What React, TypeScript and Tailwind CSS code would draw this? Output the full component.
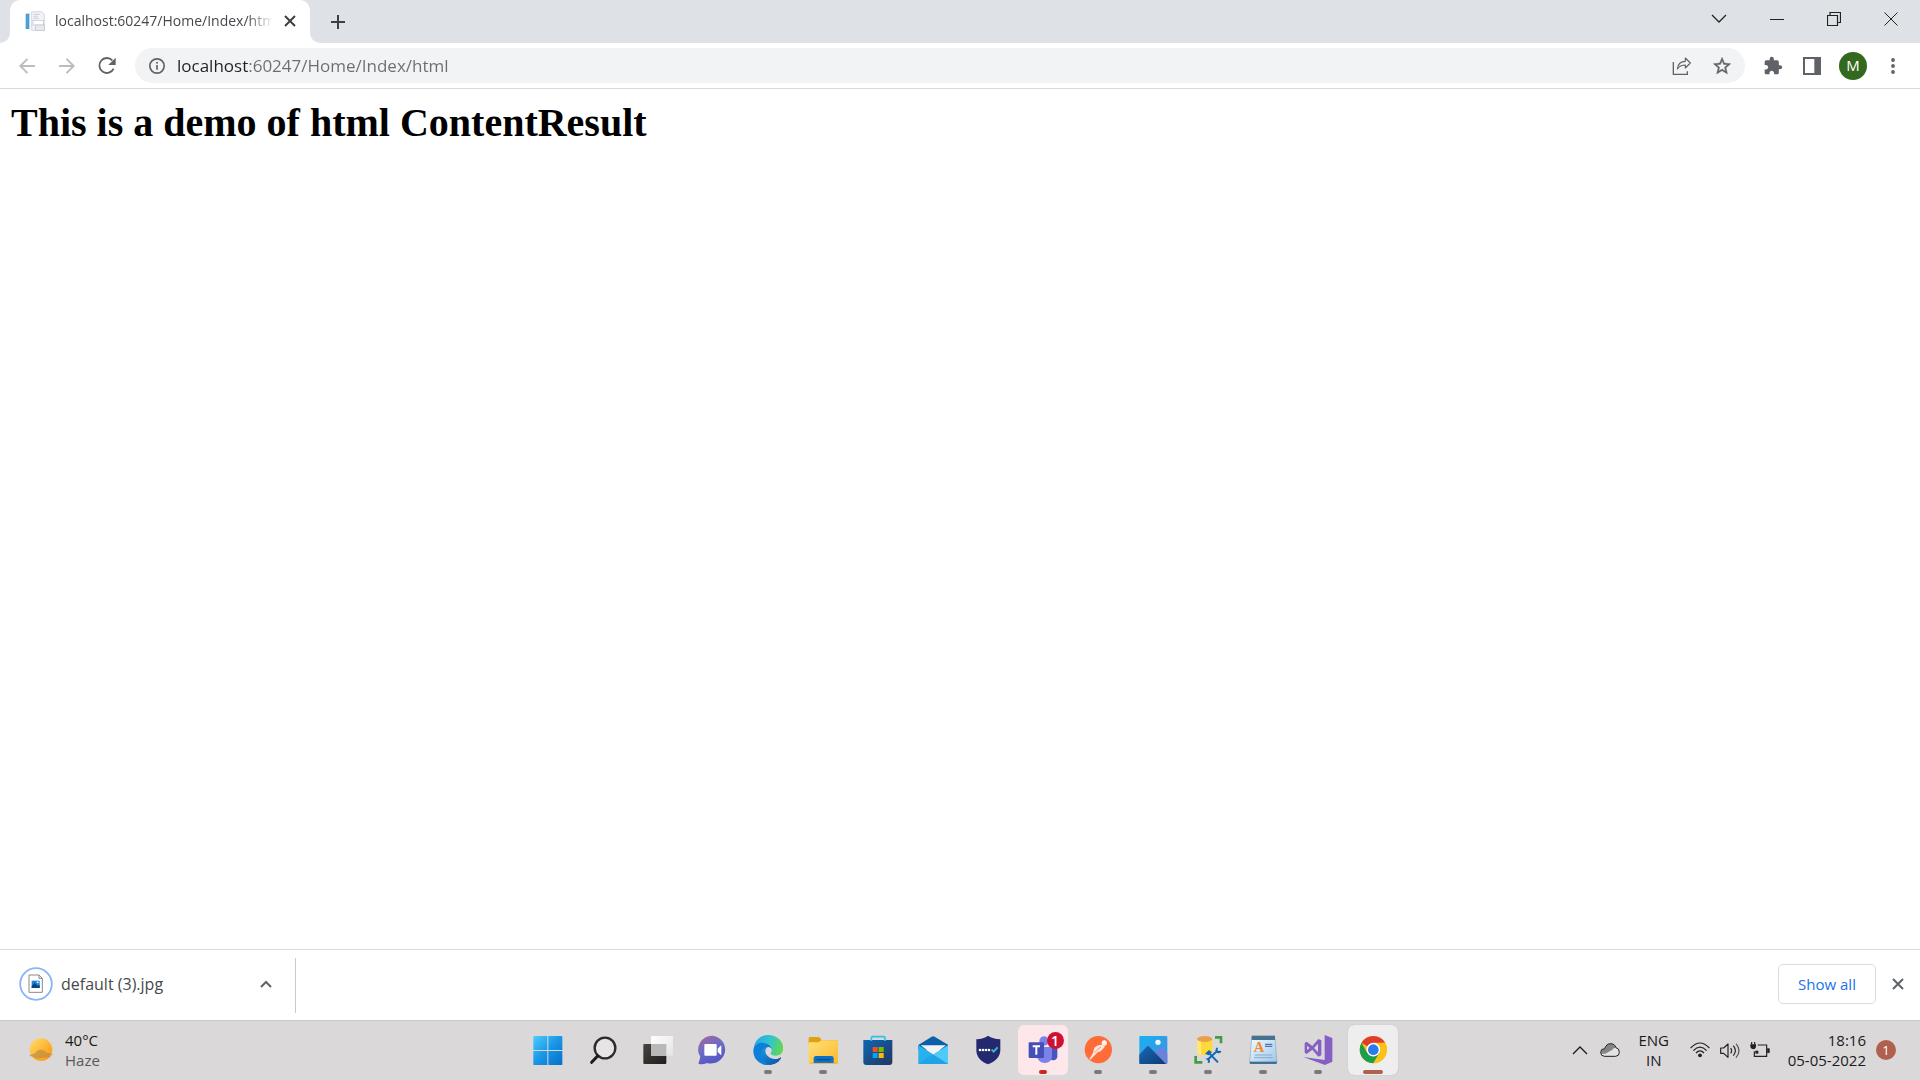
import React from "react";

type IconProps = { className?: string };

/* ---------- Browser icons ---------- */

const PageFavicon = () => (
  <svg viewBox="0 0 60 60" className="size-5 shrink-0" aria-hidden="true">
    <path d="M20 2h30l8 8v48H20z" fill="#f1f3f7" stroke="#c3c9d4" strokeWidth="2" />
    <rect x="2" y="8" width="12" height="46" fill="#4a9edb" />
    <path d="M26 10h18M26 16h12M26 22h16" stroke="#c9ced8" strokeWidth="3" />
    <rect x="24" y="28" width="32" height="14" fill="#fff" stroke="#bcc2ce" strokeWidth="2" />
    <rect x="32" y="42" width="27" height="16" fill="#e6e9f0" stroke="#bcc2ce" strokeWidth="2" />
    <path d="M14 6v50" stroke="#d4d9e2" strokeWidth="3" />
  </svg>
);

const Cross = ({ className }: IconProps) => (
  <svg viewBox="0 0 12 12" className={className} fill="none" stroke="currentColor" strokeWidth="2" aria-hidden="true">
    <path d="M1 1l10 10M11 1L1 11" />
  </svg>
);

const ArrowLeft = ({ className }: IconProps) => (
  <svg viewBox="0 0 20 20" className={className} fill="none" stroke="currentColor" strokeWidth="1.9" aria-hidden="true">
    <path d="M18 10H3.500M10.500 2.800L3.300 10l7.200 7.200" />
  </svg>
);

const Reload = () => (
  <svg viewBox="0 0 60 60" className="size-5" aria-hidden="true">
    <path d="M46 13A22.500 22.500 0 1 0 50 38" fill="none" stroke="#5f6368" strokeWidth="5.500" />
    <path d="M56 5v22H34z" fill="#5f6368" />
  </svg>
);

const InfoCircle = () => (
  <svg viewBox="0 0 48 48" className="size-4" aria-hidden="true">
    <circle cx="24" cy="24" r="21.500" fill="none" stroke="#5f6368" strokeWidth="5" />
    <path d="M24 21v14" stroke="#5f6368" strokeWidth="5" />
    <circle cx="24" cy="14.500" r="3" fill="#5f6368" />
  </svg>
);

const Share = () => (
  <svg viewBox="0 0 60 60" className="size-5" fill="none" stroke="#5f6368" strokeWidth="4" aria-hidden="true">
    <path d="M4 18v37h42v-9" />
    <path d="M16 39c2-16 10-23 24-23V6l15 15-15 15V27c-11 0-18 3-24 12z" strokeLinejoin="round" strokeWidth="3.500" />
  </svg>
);

const Star = () => (
  <svg viewBox="0 0 24 24" className="size-6" aria-hidden="true">
    <path
      d="M22 9.240l-7.190-.62L12 2 9.190 8.630 2 9.240l5.460 4.730L5.820 21 12 17.270 18.180 21l-1.630-7.030zM12 15.400l-3.760 2.270 1-4.280-3.320-2.880 4.380-.38L12 6.100l1.710 4.040 4.380.38-3.320 2.880 1 4.280z"
      fill="#5f6368"
      stroke="#5f6368"
      strokeWidth=".4"
      transform="translate(1.500 1.500) scale(.88)"
    />
  </svg>
);

const Puzzle = () => (
  <svg viewBox="0 0 24 24" className="size-5" aria-hidden="true">
    <path
      d="M20.500 11H19V7c0-1.100-.9-2-2-2h-4V3.500a2.500 2.500 0 0 0-5 0V5H4c-1.100 0-1.990.9-1.990 2v3.800H3.500c1.490 0 2.700 1.210 2.700 2.700s-1.210 2.700-2.700 2.700H2V20c0 1.100.9 2 2 2h3.800v-1.500c0-1.490 1.210-2.700 2.700-2.700s2.700 1.210 2.700 2.700V22H17c1.100 0 2-.9 2-2v-4h1.500a2.500 2.500 0 0 0 0-5z"
      fill="#5f6368"
    />
  </svg>
);

const SidePanel = () => (
  <svg viewBox="0 0 54 54" className="size-[18px]" aria-hidden="true">
    <rect x="3" y="3" width="48" height="48" fill="#fff" stroke="#5f6368" strokeWidth="6" />
    <rect x="34" y="3" width="18" height="48" fill="#5f6368" />
  </svg>
);

const ImageFile = () => (
  <svg viewBox="0 0 102 102" className="size-[34px] shrink-0" aria-hidden="true">
    <circle cx="51" cy="51" r="47.500" fill="#fff" stroke="#8ab4f8" strokeWidth="5.500" />
    <path d="M30 24h30l10 10v42H30z" fill="#fff" stroke="#8a8a8a" strokeWidth="3" />
    <path d="M60 24v10h10" fill="none" stroke="#8a8a8a" strokeWidth="3" />
    <rect x="38" y="41" width="24" height="22" fill="#1685dc" />
    <path d="M38 57l9-9 9 9 6-4v10H38z" fill="#0b3f86" />
    <circle cx="56" cy="46" r="3" fill="#e3f3ff" />
  </svg>
);

/* ---------- Taskbar icons, each on a 90 unit grid ---------- */

const Icon = ({ children }: { children: React.ReactNode }) => (
  <svg viewBox="0 0 90 90" className="size-[30px]" aria-hidden="true">
    {children}
  </svg>
);

const Gradient = ({ id, from, to }: { id: string; from: string; to: string }) => (
  <linearGradient id={id} x1="0" y1="0" x2="1" y2="1">
    <stop offset="0" stopColor={from} />
    <stop offset="1" stopColor={to} />
  </linearGradient>
);

const StartIcon = () => (
  <Icon>
    <linearGradient id="win" gradientUnits="userSpaceOnUse" x1="0" y1="0" x2="88" y2="88">
      <stop offset="0" stopColor="#4fd0ff" />
      <stop offset=".5" stopColor="#1a97e6" />
      <stop offset="1" stopColor="#0271cb" />
    </linearGradient>
    <path d="M3 3h40v42H1V5q0-2 2-2zM46 3h40q2 0 2 2v40H46zM1 48h42v42H3q-2 0-2-2zM46 48h42v40q0 2-2 2H46z" fill="url(#win)" />
  </Icon>
);

const SearchIcon = () => (
  <Icon>
    <circle cx="51" cy="39" r="31" fill="#e6e4e4" stroke="#2b2b2b" strokeWidth="7" />
    <path d="M29 63L11 82" stroke="#1c1c1c" strokeWidth="9" strokeLinecap="round" />
  </Icon>
);

const TaskViewIcon = () => (
  <Icon>
    <Gradient id="tvd" from="#454440" to="#1f1f1d" />
    <Gradient id="tvl" from="#ffffff" to="#e3e3e3" />
    <rect x="1" y="27" width="69" height="60" rx="3" fill="url(#tvd)" />
    <rect x="24" y="3" width="67" height="59" rx="3" fill="url(#tvl)" />
    <rect x="24" y="27" width="46" height="35" fill="#b9b9b7" />
  </Icon>
);

const ChatIcon = () => (
  <Icon>
    <linearGradient id="chat" x1=".2" y1="0" x2=".6" y2="1">
      <stop offset="0" stopColor="#a0689f" />
      <stop offset=".45" stopColor="#6f6bc6" />
      <stop offset="1" stopColor="#5255c4" />
    </linearGradient>
    <path d="M45 2a43 42 0 1 1-18 82Q14 90 3 87 0 86 3 80L7 66A42 42 0 0 1 45 2z" fill="url(#chat)" />
    <rect x="19" y="27" width="37" height="35" rx="3" fill="#fff" />
    <path d="M59 41l9-9q2-1 2 2v24q0 3-2 1l-9-8z" fill="#fff" />
  </Icon>
);

const EdgeIcon = () => (
  <Icon>
    <linearGradient id="edgeTop" x1="0" y1=".4" x2="1" y2=".6">
      <stop offset="0" stopColor="#22a9e8" />
      <stop offset=".5" stopColor="#2fc5cf" />
      <stop offset="1" stopColor="#67d84b" />
    </linearGradient>
    <Gradient id="edgeLow" from="#1c9be5" to="#0a4f9e" />
    <path d="M2 40C6 14 24 0 46 0c28 0 45 21 45 40 0 14-10 22-22 22-10 0-16-3-16-7 0-3 4-5 3-12C54 32 40 24 26 24 14 24 6 31 2 40z" fill="url(#edgeTop)" />
    <path d="M2 40C6 28 17 22 29 23c15 1 26 9 27 19-3-4-7-6-11-6-10 0-18 12-13 27 4 14 19 22 24 26C26 97-5 72 2 40z" fill="#0c80d8" />
    <path d="M45 36c-12-2-21 9-21 21 0 16 14 33 31 32 13-1 24-9 29-19 1-3-1-4-3-2-6 4-14 5-21 3-14-3-24-14-23-24 1-6 4-10 8-11z" fill="url(#edgeLow)" />
  </Icon>
);

const ExplorerIcon = () => (
  <Icon>
    <Gradient id="fold" from="#ffe07a" to="#fdb92a" />
    <path d="M2 10q0-4 4-4h25q3 0 5 3l5 7h47q3 0 3 4v10H2z" fill="#e0a10c" />
    <path d="M2 22h30l8-6h48q3 0 3 3v62q0 4-4 4H6q-4 0-4-4z" fill="url(#fold)" />
    <path d="M17 84V70q0-7 7-7h46q7 0 7 7v14z" fill="#0c70c4" />
    <path d="M28 74h37" stroke="#084d96" strokeWidth="4" strokeLinecap="round" />
    <path d="M5 85h83" stroke="#e9a320" strokeWidth="2" />
  </Icon>
);

const StoreIcon = () => (
  <Icon>
    <Gradient id="store" from="#0d67b4" to="#243560" />
    <path d="M25 20V9q0-4 4-4h33q4 0 4 4v11" fill="none" stroke="#2bc0f4" strokeWidth="5" />
    <path d="M1 15h87v66q0 9-9 9H10q-9 0-9-9z" fill="url(#store)" />
    <path d="M25 15v3M66 15v3" stroke="#2bc0f4" strokeWidth="5" />
    <rect x="29" y="36" width="15" height="15" fill="#f25022" />
    <rect x="47" y="36" width="15" height="15" fill="#7fba00" />
    <rect x="29" y="54" width="15" height="15" fill="#00a4ef" />
    <rect x="47" y="54" width="15" height="15" fill="#ffb900" />
  </Icon>
);

const MailIcon = () => (
  <Icon>
    <Gradient id="mail" from="#27b6ee" to="#28a8ea" />
    <path d="M1 30L41 5q5-3 9 0l41 25v15H1z" fill="#0c5fa9" />
    <path d="M8 31h76L46 60z" fill="#f3f3f3" />
    <path d="M1 30l90 57H1z" fill="url(#mail)" />
    <path d="M91 30L46 58l45 29z" fill="#4ccbf8" />
    <path d="M46 58l45 29H1z" fill="#1b9de2" opacity=".6" />
  </Icon>
);

const ShieldIcon = () => (
  <Icon>
    <path d="M45 2c10 7 22 10 37 11v32c0 21-16 35-37 43C24 80 10 66 10 45V13C25 12 36 9 45 2z" fill="#24296f" />
    <g fill="#fff">
      <circle cx="21" cy="45" r="4" />
      <circle cx="30" cy="45" r="4" />
      <circle cx="39" cy="45" r="4" />
      <circle cx="48" cy="45" r="4" />
    </g>
    <path d="M56 44l6 6 12-13" fill="none" stroke="#3fb6c6" strokeWidth="6" />
  </Icon>
);

const TeamsIcon = () => (
  <Icon>
    <circle cx="72" cy="23" r="10" fill="#5059c9" />
    <path d="M60 36h28v28q0 11-12 12-12-1-16-10z" fill="#4b53bc" />
    <circle cx="48" cy="18" r="14" fill="#7b83eb" />
    <path d="M30 36h42v28c0 13-10 20-22 20S28 76 28 64z" fill="#7b83eb" />
    <rect x="2" y="22" width="46" height="47" rx="3" fill="#464eb8" />
    <path d="M14 34h22M25 34v25" stroke="#fff" strokeWidth="6" />
  </Icon>
);

const PostmanIcon = () => (
  <Icon>
    <circle cx="46" cy="44" r="41" fill="#ff6c37" />
    <circle cx="64" cy="24" r="8" fill="#fff1ea" />
    <path d="M34 38q10-10 23-9l9 6-13 14-9 3-22 22-3-2 11-18z" fill="#ffe9df" />
    <path d="M42 44l12-8M34 53l9-7" stroke="#ff6c37" strokeWidth="2" />
  </Icon>
);

const PhotosIcon = () => (
  <Icon>
    <Gradient id="sky" from="#16b3f2" to="#4a8ae0" />
    <Gradient id="hill" from="#1c68b4" to="#0b3c75" />
    <rect x="4" y="3" width="84" height="84" rx="3" fill="url(#sky)" />
    <path d="M46 58l18-18q4-3 8 0l16 17v28H60z" fill="#6d80dc" />
    <path d="M4 59l22-24q4-4 8 0l50 52H7q-3 0-3-3z" fill="url(#hill)" />
    <circle cx="60" cy="22" r="8" fill="#f2faff" />
  </Icon>
);

const DatabaseIcon = () => (
  <Icon>
    <path d="M12 12v40q0 8 23 8t23-8V12z" fill="#ffd83c" />
    <path d="M12 12v40q0 7 12 8V12z" fill="#ffe773" />
    <ellipse cx="35" cy="12" rx="23" ry="9" fill="#e9a04a" />
    <path d="M66 7h18v18" fill="none" stroke="#479a44" strokeWidth="8" />
    <path d="M8 63v19h20" fill="none" stroke="#479a44" strokeWidth="8" />
    <path d="M43 75l30-28M46 52l29 30" stroke="#0c6bb8" strokeWidth="6" />
    <path d="M36 56l12-11 9 7-10 9zM70 38q-5 9 0 14 6 6 15-1l-2-4-7 1-3-4 3-6zM36 72q8-5 13 0 4 6 0 12l-5-1 1-7-4-3z" fill="#0c6bb8" />
  </Icon>
);

const WordpadIcon = () => (
  <Icon>
    <Gradient id="pad" from="#f5fbff" to="#9fc7e6" />
    <path d="M11 8h70l6 73H5z" fill="url(#pad)" stroke="#8aa9c2" strokeWidth="2" />
    <path d="M11 2h70v13H11z" fill="#47728f" />
    <path d="M5 80h82v4q0 3-4 3H9q-4 0-4-3z" fill="#3f7195" />
    <text x="17" y="51" fontFamily="Liberation Serif" fontWeight="700" fontSize="44" fill="#f28a35">
      A
    </text>
    <path d="M51 28h22M51 34h22" stroke="#4f78b5" strokeWidth="4" />
    <path d="M20 60h52M18 68h56" stroke="#86a9cf" strokeWidth="3" />
  </Icon>
);

const VisualStudioIcon = () => (
  <Icon>
    <path d="M65 0l23 9v71L66 90 1 66l64 9z" fill="#865fc5" />
    <path
      d="M5 24l6-4 17 13 18-21 9 4v45l-9 4-18-21-17 13-6-4zm7 8v13l8-6zm33-6L33 39l12 13z"
      fill="#865fc5"
      fillRule="evenodd"
    />
  </Icon>
);

const ChromeIcon = () => (
  <Icon>
    <circle cx="46" cy="44" r="41" fill="#fbc116" />
    <path d="M46 44L10.500 23.500A41 41 0 0 1 81.500 23.500H46z" fill="#e33b2e" />
    <path d="M10.500 23.500A41 41 0 0 0 46 85L64 54.500 46 44 28 54z" fill="#1e9e4a" />
    <path d="M81.500 23.500A41 41 0 0 1 46 85L64 54.500 62 24z" fill="#fbc116" />
    <circle cx="46" cy="44" r="20.500" fill="#fff" />
    <circle cx="46" cy="44" r="16" fill="#2a79ee" />
  </Icon>
);

const WeatherIcon = () => (
  <svg viewBox="0 0 78 78" className="size-[26px]" aria-hidden="true">
    <Gradient id="sun" from="#ffe069" to="#fb8f0c" />
    <circle cx="39" cy="38" r="34" fill="url(#sun)" />
    <path d="M3 57q6-7 16-7 8-12 20-12 10 0 15 9 12 0 22 7-8 1-12 2 4 3 6 5-20-2-32 3-14 3-22-4-5-3-13-3z" fill="#b98a45" opacity=".65" />
  </svg>
);

/* ---------- System tray icons ---------- */

const CloudIcon = () => (
  <svg viewBox="0 0 60 42" className="h-[14px] w-5" aria-hidden="true">
    <path d="M13 40Q2 39 2 28T14 17Q19 2 32 2q12 0 16 12 10 2 10 14 0 11-11 12z" fill="#e4e2e2" />
    <path d="M4 32Q1 19 14 17 19 2 32 2q12 0 16 12-6-1-12 7L16 32z" fill="#858585" />
    <path d="M13 40Q2 39 2 28T14 17Q19 2 32 2q12 0 16 12 10 2 10 14 0 11-11 12z" fill="none" stroke="#222" strokeWidth="3" />
  </svg>
);

const WifiIcon = () => (
  <svg viewBox="0 0 60 48" className="h-4 w-5" fill="none" stroke="#222" strokeWidth="3.500" aria-hidden="true">
    <path d="M2 18q28-30 56 0M10 26q20-21 40 0M18 33q12-13 24 0" />
    <circle cx="30" cy="40" r="4" fill="#222" />
  </svg>
);

const SoundIcon = () => (
  <svg viewBox="0 0 60 51" className="h-[17px] w-5" fill="none" stroke="#222" strokeWidth="3.500" aria-hidden="true">
    <path d="M2 18h9L24 6v40L11 34H2z" strokeLinejoin="round" />
    <path d="M32 18q6 8 0 16M40 11q12 15 0 30" />
    <path d="M48 5q18 21 0 42" stroke="#555" />
  </svg>
);

const BatteryIcon = () => (
  <svg viewBox="0 0 60 48" className="h-4 w-5" fill="none" stroke="#222" strokeWidth="3.500" aria-hidden="true">
    <path d="M23 9h27v34H13V28" />
    <path d="M52 20h6v12h-6z" fill="#222" strokeWidth="2" />
    <path d="M5 0v8M14 0v8" />
    <path d="M1 7h17v8q-2 7-8 7t-9-7z" fill="#222" stroke="none" />
    <path d="M16 26h9v9h-9z" fill="#222" stroke="none" />
  </svg>
);

const ChevronUp = ({ className }: IconProps) => (
  <svg viewBox="0 0 16 10" className={className} fill="none" stroke="currentColor" strokeWidth="1.300" aria-hidden="true">
    <path d="M1 9l7-7 7 7" />
  </svg>
);

/* ---------- Page ---------- */

type TaskItem = { name: string; icon: React.ReactNode; state?: "running" | "alert" | "active"; badge?: string };

const tasks: TaskItem[] = [
  { name: "Start", icon: <StartIcon /> },
  { name: "Search", icon: <SearchIcon /> },
  { name: "Task View", icon: <TaskViewIcon /> },
  { name: "Chat", icon: <ChatIcon /> },
  { name: "Microsoft Edge", icon: <EdgeIcon />, state: "running" },
  { name: "File Explorer", icon: <ExplorerIcon />, state: "running" },
  { name: "Microsoft Store", icon: <StoreIcon /> },
  { name: "Mail", icon: <MailIcon /> },
  { name: "Password manager", icon: <ShieldIcon /> },
  { name: "Microsoft Teams", icon: <TeamsIcon />, state: "alert", badge: "1" },
  { name: "Postman", icon: <PostmanIcon />, state: "running" },
  { name: "Photos", icon: <PhotosIcon />, state: "running" },
  { name: "SQL Server Management Studio", icon: <DatabaseIcon />, state: "running" },
  { name: "WordPad", icon: <WordpadIcon />, state: "running" },
  { name: "Visual Studio", icon: <VisualStudioIcon />, state: "running" },
  { name: "Google Chrome", icon: <ChromeIcon />, state: "active" },
];

const tileStyle = {
  idle: "",
  running: "",
  alert: "bg-[#fde7ea]",
  active: "bg-[#eeeeee] shadow-[0_0_1px_#aaa]",
};

const markStyle = {
  idle: "hidden",
  running: "w-2 bg-[#7b7a7a]",
  alert: "w-2 bg-[#c62b1c]",
  active: "w-5 bg-[#b0614d]",
};

const TaskButton = ({ item }: { item: TaskItem }) => {
  const state = item.state ?? "idle";
  return (
    <button
      type="button"
      aria-label={item.name}
      className={`relative flex size-[50px] items-center justify-center rounded-md ${tileStyle[state]}`}
    >
      {item.icon}
      {item.badge && (
        <span className="absolute top-[7px] right-1 flex size-[17px] items-center justify-center rounded-full bg-[#cc1133] text-sm leading-none font-semibold text-white">
          {item.badge}
        </span>
      )}
      <span className={`absolute bottom-px h-1 rounded-full ${markStyle[state]}`} />
    </button>
  );
};

const TabStrip = () => (
  <div className="flex h-[43px] bg-white">
    <div className="w-[10px] rounded-br-[10px] bg-[#dee1e6]" />
    <div className="bg-[#dee1e6]">
      <div className="flex h-full w-[300px] items-center rounded-t-[10px] bg-white pr-[14px] pb-[2px] pl-[15px]">
        <PageFavicon />
        <span className="ml-[10px] flex-1 overflow-hidden text-sm whitespace-nowrap text-[#45494d] [mask-image:linear-gradient(to_right,black_88%,transparent)]">
          localhost:60247/Home/Index/html
        </span>
        <button type="button" aria-label="Close tab" className="ml-[11px] text-[#3c4043]">
          <Cross className="size-3" />
        </button>
      </div>
    </div>
    <div className="flex flex-1 items-center justify-between rounded-bl-[10px] bg-[#dee1e6]">
      <button type="button" aria-label="New tab" className="ml-5 text-[#3c4043]">
        <svg viewBox="0 0 16 16" className="size-4" fill="none" stroke="currentColor" strokeWidth="2" aria-hidden="true">
          <path d="M8 1v14M1 8h14" />
        </svg>
      </button>
      <div className="mb-[6px] flex items-center gap-[43px] pr-[22px] text-[#222]">
        <button type="button" aria-label="Search tabs">
          <ChevronUp className="h-[10px] w-4 rotate-180" />
        </button>
        <button type="button" aria-label="Minimize">
          <svg viewBox="0 0 14 14" className="size-[14px]" stroke="currentColor" aria-hidden="true">
            <path d="M0 7.500h14" />
          </svg>
        </button>
        <button type="button" aria-label="Restore">
          <svg viewBox="0 0 14 14" className="size-[14px]" fill="none" stroke="currentColor" aria-hidden="true">
            <path d="M.5 3.500h10v10H.5zM3 3V.5h10.500v10H11" strokeWidth="1.200" />
          </svg>
        </button>
        <button type="button" aria-label="Close window">
          <svg viewBox="0 0 14 14" className="size-[14px]" fill="none" stroke="currentColor" aria-hidden="true">
            <path d="M.5.5l13 13M13.500.5l-13 13" />
          </svg>
        </button>
      </div>
    </div>
  </div>
);

const Toolbar = () => (
  <div className="flex h-[46px] items-center border-b border-[#d9dadc] pr-[19px] pl-[17px]">
    <nav className="flex gap-5">
      <button type="button" aria-label="Back" className="text-[#babcbe]">
        <ArrowLeft className="size-5" />
      </button>
      <button type="button" aria-label="Forward" className="text-[#babcbe]">
        <ArrowLeft className="size-5 rotate-180" />
      </button>
      <button type="button" aria-label="Reload">
        <Reload />
      </button>
    </nav>
    <div className="ml-[18px] flex h-[35px] flex-1 items-center rounded-full bg-[#f1f3f4] pr-[11px] pl-[14px]">
      <button type="button" aria-label="View site information">
        <InfoCircle />
      </button>
      <input
        type="text"
        aria-label="Address"
        defaultValue="localhost:60247/Home/Index/html"
        className="ml-3 h-6 flex-1 bg-[linear-gradient(to_right,#202124_72px,#6a6e73_72px)] bg-clip-text text-[17px] text-transparent outline-none"
      />
      <button type="button" aria-label="Share">
        <Share />
      </button>
      <button type="button" aria-label="Bookmark" className="ml-[18px]">
        <Star />
      </button>
    </div>
    <div className="ml-[18px] flex items-center gap-5">
      <button type="button" aria-label="Extensions">
        <Puzzle />
      </button>
      <button type="button" aria-label="Side panel">
        <SidePanel />
      </button>
      <button
        type="button"
        aria-label="Profile"
        className="-mx-[2px] flex size-7 items-center justify-center rounded-full bg-[#33691e] text-[15px] text-white"
      >
        M
      </button>
      <button type="button" aria-label="Menu">
        <svg viewBox="0 0 16 16" className="size-4" fill="#5f6368" aria-hidden="true">
          <circle cx="8" cy="2" r="1.900" />
          <circle cx="8" cy="8" r="1.900" />
          <circle cx="8" cy="14" r="1.900" />
        </svg>
      </button>
    </div>
  </div>
);

const DownloadBar = () => (
  <div className="flex h-[71px] items-center border-t border-[#d9dadc] bg-white pr-4">
    <div className="flex h-[55px] w-[296px] items-center border-r border-[#c8cacd] pr-[22px] pb-[2px] pl-[19px]">
      <ImageFile />
      <span className="ml-2 flex-1 text-base text-[#45494d]">default (3).jpg</span>
      <button type="button" aria-label="Download options" className="text-[#5f6368]">
        <svg viewBox="0 0 14 14" className="size-[14px]" fill="none" stroke="currentColor" strokeWidth="2" aria-hidden="true">
          <path d="M2 10l5-5 5 5" />
        </svg>
      </button>
    </div>
    <div className="ml-auto flex items-center gap-4 pb-[2px]">
      <button
        type="button"
        className="h-10 w-[98px] rounded-[5px] border border-[#dadce0] text-[15px] font-medium text-[#1a73e8]"
      >
        Show all
      </button>
      <button type="button" aria-label="Close downloads" className="text-[#5f6368]">
        <Cross className="size-3" />
      </button>
    </div>
  </div>
);

const Taskbar = () => (
  <footer className="grid h-[60px] grid-cols-[1fr_auto_1fr] items-center bg-[#dad8d9] text-[15px] leading-5 text-[#1b1b1b] shadow-[inset_0_1px_0_#c9c8c8]">
    <button type="button" className="flex items-center gap-[11px] justify-self-start pl-7 text-left">
      <WeatherIcon />
      <span className="flex flex-col">
        <span>40°C</span>
        <span className="text-[#5a5959]">Haze</span>
      </span>
    </button>
    <div className="flex gap-[5px]">
      {tasks.map((item) => (
        <TaskButton key={item.name} item={item} />
      ))}
    </div>
    <div className="flex items-center justify-self-end pr-6">
      <button type="button" aria-label="Show hidden icons" className="mr-3">
        <ChevronUp className="h-[10px] w-4" />
      </button>
      <button type="button" aria-label="OneDrive">
        <CloudIcon />
      </button>
      <button type="button" className="mr-5 ml-[18px] w-8 text-center text-[15px] leading-5">
        ENG
        <br />
        IN
      </button>
      <button type="button" aria-label="Network, volume and battery" className="flex items-center gap-[10px]">
        <WifiIcon />
        <SoundIcon />
        <BatteryIcon />
      </button>
      <button type="button" className="ml-[18px] text-right text-[15px] leading-5">
        18:16
        <br />
        05-05-2022
      </button>
      <button
        type="button"
        aria-label="Notifications"
        className="ml-[10px] flex size-5 items-center justify-center rounded-full bg-[#b0614d] text-[13px] text-white"
      >
        1
      </button>
    </div>
  </footer>
);

export default function App() {
  return (
    <div className="flex min-h-screen flex-col bg-white font-['Open_Sans','Noto_Sans',sans-serif]">
      <header>
        <TabStrip />
        <Toolbar />
      </header>
      <main className="flex-1 px-[11px] pt-[11px] font-['Liberation_Serif',serif]">
        <h1 className="text-[40px] leading-[46px] font-bold text-black">This is a demo of html ContentResult</h1>
      </main>
      <DownloadBar />
      <Taskbar />
    </div>
  );
}
